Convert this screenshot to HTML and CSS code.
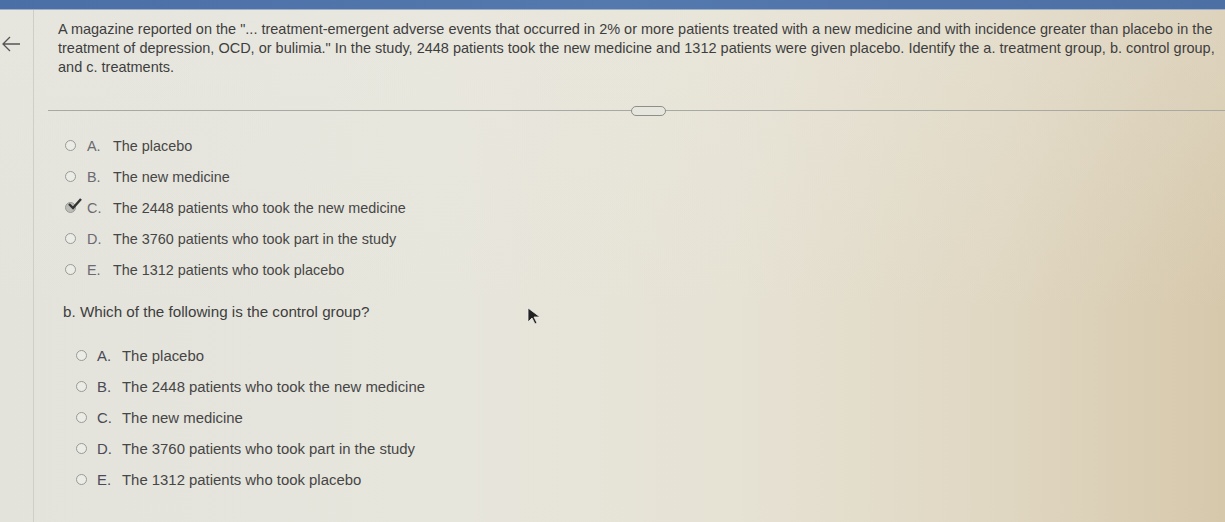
FILE: index.html
```html
<!DOCTYPE html>
<html>
<head>
<meta charset="utf-8">
<link rel="stylesheet" href="styles.css">
</head>
<body>
<div class="topbar"></div>
<div class="page">
  <aside class="side">
    <svg class="back" width="20" height="16" viewBox="0 0 20 16"><path d="M19 8H2M9 1L2 8l7 7" fill="none" stroke="#555" stroke-width="1.3"/></svg>
  </aside>
  <main class="content">
    <p class="question">A magazine reported on the "... treatment-emergent adverse events that occurred in 2% or more patients treated with a new medicine and with incidence greater than placebo in the<br>treatment of depression, OCD, or bulimia." In the study, 2448 patients took the new medicine and 1312 patients were given placebo. Identify the a. treatment group, b. control group,<br>and c. treatments.</p>
    <div class="divider"><span class="pill"></span></div>
    <ul class="options opts-a">
      <li><span class="radio"></span><span class="letter">A.</span><span>The placebo</span></li>
      <li><span class="radio"></span><span class="letter">B.</span><span>The new medicine</span></li>
      <li><span class="radio checked"><svg class="check" width="14" height="12" viewBox="0 0 14 12"><path d="M1 6l4 4 8-9" fill="none" stroke="#333" stroke-width="2.4"/></svg></span><span class="letter">C.</span><span>The 2448 patients who took the new medicine</span></li>
      <li><span class="radio"></span><span class="letter">D.</span><span>The 3760 patients who took part in the study</span></li>
      <li><span class="radio"></span><span class="letter">E.</span><span>The 1312 patients who took placebo</span></li>
    </ul>
    <p class="subq">b. Which of the following is the control group?</p>
    <ul class="options opts-b">
      <li><span class="radio"></span><span class="letter">A.</span><span>The placebo</span></li>
      <li><span class="radio"></span><span class="letter">B.</span><span>The 2448 patients who took the new medicine</span></li>
      <li><span class="radio"></span><span class="letter">C.</span><span>The new medicine</span></li>
      <li><span class="radio"></span><span class="letter">D.</span><span>The 3760 patients who took part in the study</span></li>
      <li><span class="radio"></span><span class="letter">E.</span><span>The 1312 patients who took placebo</span></li>
    </ul>
    <svg class="cursor" width="14" height="18" viewBox="0 0 14 18"><path d="M1 1v14l4-4 3 6 2-1-3-6h6z" fill="#222" stroke="#eee" stroke-width="0.8"/></svg>
  </main>
</div>
</body>
</html>
```

FILE: styles.css
```css
html, body {
  margin: 0;
  padding: 0;
}
body {
  width: 1225px;
  height: 522px;
  overflow: hidden;
  font-family: "Liberation Sans", Arial, sans-serif;
  color: #3a3a3a;
  background:
    linear-gradient(to bottom, rgba(236,234,226,0.35) 0%, rgba(236,234,226,0) 60%),
    linear-gradient(to right, #e3e3dc 0%, #e7e6dd 35%, #e6e2d4 60%, #e0d7c2 82%, #d6c8ab 100%);
}
.topbar {
  height: 9px;
  background: linear-gradient(to right, #4a6ea6, #5479ae 50%, #4c6fa4);
  border-bottom: 1px solid #9fb0c6;
}
.page {
  display: flex;
  height: 512px;
}
.side {
  width: 34px;
  flex: none;
  border-right: 1px solid #cfcfc8;
  display: flex;
  justify-content: flex-start;
  padding-top: 26px;
  box-sizing: border-box;
}
.back {
  margin-left: 1px;
}
.content {
  position: relative;
  flex: 1;
  padding-left: 24px;
}
.question {
  margin: 10px 0 0 0;
  font-size: 14.5px;
  line-height: 19px;
  white-space: nowrap;
  color: #3e3e3e;
}
.divider {
  position: relative;
  height: 10px;
  margin: 29px 0 0 -10px;
  display: flex;
  align-items: center;
  justify-content: center;
}
.divider::before {
  content: "";
  position: absolute;
  left: 0;
  right: 0;
  top: 4px;
  border-top: 1px solid #a9a9a3;
}
.pill {
  position: relative;
  width: 33px;
  height: 8px;
  border: 1px solid #8f8f8a;
  border-radius: 6px;
  background: #e6e6de;
  margin-left: 24px;
}
.options {
  list-style: none;
  margin: 0;
  padding: 0;
}
.options li {
  height: 31px;
  display: flex;
  align-items: center;
  font-size: 14.4px;
  color: #464646;
}
.opts-a {
  margin-top: 14px;
  padding-left: 7px;
}
.opts-b {
  margin-top: 19px;
  padding-left: 18px;
}
.opts-b li {
  font-size: 14.9px;
}
.radio {
  position: relative;
  width: 9px;
  height: 9px;
  border: 1px solid #9a9a96;
  border-radius: 50%;
  background: #ecece6;
  margin-right: 11px;
  flex: none;
}
.opts-b .radio {
  margin-right: 10px;
}
.radio.checked {
  background: #bdbdb8;
}
.check {
  position: absolute;
  left: 2px;
  top: -5px;
}
.letter {
  width: 26px;
  flex: none;
  color: #6a6a72;
}
.opts-b .letter {
  width: 25px;
  color: #4a4a58;
}
.subq {
  margin: 17px 0 0 5px;
  font-size: 15.2px;
  line-height: 19px;
  color: #3e3e3e;
}
.cursor {
  position: absolute;
  left: 493px;
  top: 297px;
}
```
